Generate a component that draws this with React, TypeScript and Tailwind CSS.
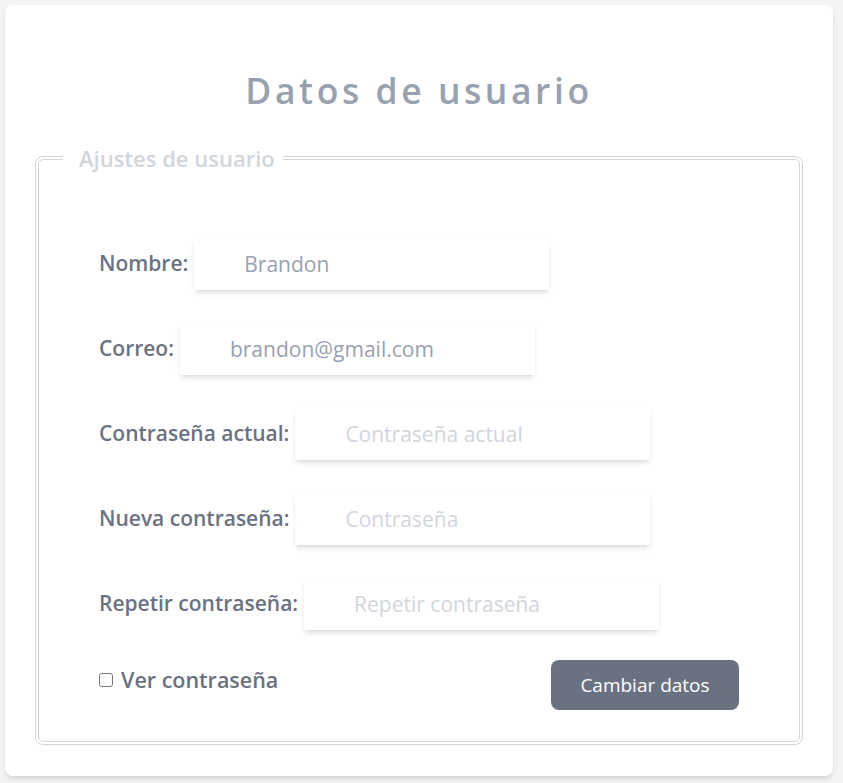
import { useState } from "react";

const fields = [
  { label: "Nombre:", value: "Brandon", placeholder: "" },
  { label: "Correo:", value: "brandon@gmail.com", placeholder: "" },
  { label: "Contraseña actual:", value: "", placeholder: "Contraseña actual" },
  { label: "Nueva contraseña:", value: "", placeholder: "Contraseña" },
  { label: "Repetir contraseña:", value: "", placeholder: "Repetir contraseña" },
];

export default function App() {
  const [show, setShow] = useState(false);

  return (
    <div
      className="min-h-screen bg-gray-100 pt-[5px] pl-[5px] pr-[10px] pb-[8px]"
      style={{ fontFamily: '"Open Sans", "Noto Sans", sans-serif' }}
    >
      <div className="bg-white rounded-lg shadow-md px-[30px] pt-[60px] pb-[31px]">
        <h1 className="text-center text-[35.5px] font-semibold tracking-widest text-gray-400 leading-[50px]">
          Datos de usuario
        </h1>
        <fieldset className="mt-[29px] border-4 border-double border-gray-300 rounded-lg p-0">
          <legend className="ml-[24px] pl-[16px] pr-[8px] text-[22px] font-semibold text-gray-300 leading-[28px]">
            Ajustes de usuario
          </legend>
          <div className="px-[60px] pt-[66px] pb-[31px]">
            <div className="flex flex-col gap-[33px]">
              {fields.map((f) => (
                <div key={f.label} className="flex items-center gap-[6px]">
                  <label className="text-[21px] font-semibold text-gray-500">
                    {f.label}
                  </label>
                  <input
                    type={f.value ? "text" : show ? "text" : "password"}
                    defaultValue={f.value}
                    placeholder={f.placeholder}
                    className="w-[355px] h-[52px] bg-white shadow-md pl-[50px] text-[21px] text-gray-400 placeholder:text-gray-300 outline-none"
                  />
                </div>
              ))}
            </div>
            <div className="flex items-start justify-between mt-[30px]">
              <label className="mt-[4px] flex items-center gap-[8px] text-[21.5px] font-semibold text-gray-500">
                <input
                  type="checkbox"
                  checked={show}
                  onChange={() => setShow(!show)}
                  className="w-[14px] h-[14px]"
                />
                Ver contraseña
              </label>
              <button className="w-[188px] h-[50px] rounded-lg bg-gray-500 text-white text-[19px]">
                Cambiar datos
              </button>
            </div>
          </div>
        </fieldset>
      </div>
    </div>
  );
}
